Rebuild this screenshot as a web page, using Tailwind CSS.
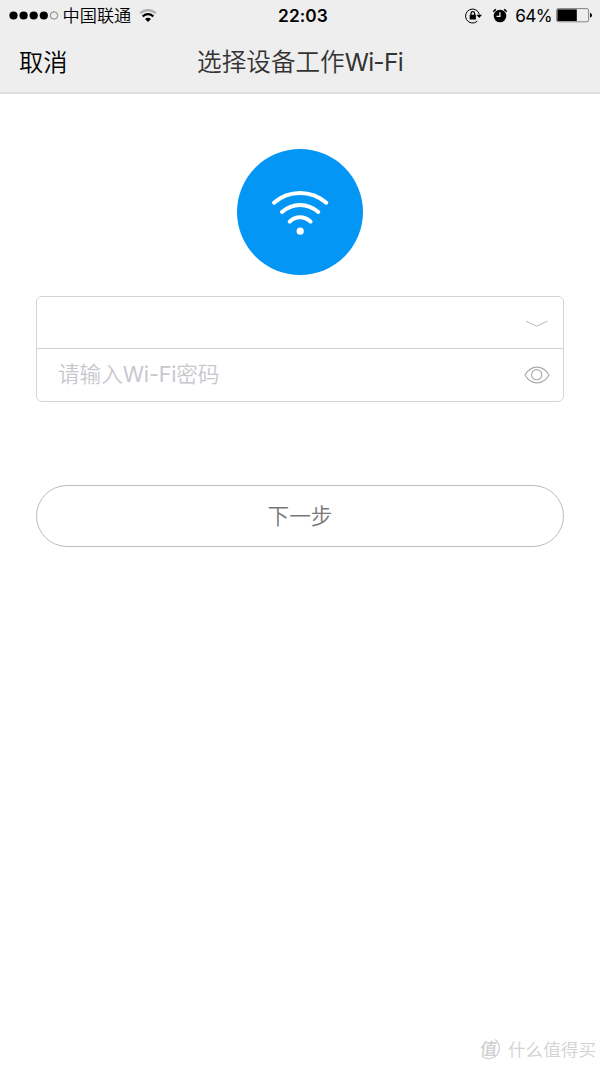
<!DOCTYPE html>
<html lang="zh-CN">
<head>
<meta charset="utf-8">
<title>选择设备工作Wi-Fi</title>
<script src="https://cdn.jsdelivr.net/npm/@tailwindcss/browser@4"></script>
</head>
<body class="bg-white">
<div class="relative flex h-[1067px] w-[600px] flex-col overflow-hidden bg-white font-['Inter','Noto_Sans_CJK_SC',sans-serif]">
  <header class="h-[94px] shrink-0 border-b-2 border-[#e0e0e0] bg-[#eeeeee]">
    <div class="grid h-[30px] grid-cols-3 items-center text-black">
      <div class="flex h-[30px] items-center pl-[9px]">
        <svg class="h-[10px] w-[50px]" viewBox="0 0 50 10"><circle cx="4.5" cy="4.5" r="4.1"/><circle cx="14.6" cy="4.5" r="4.1"/><circle cx="24.7" cy="4.5" r="4.1"/><circle cx="34.8" cy="4.5" r="4.1"/><circle cx="45" cy="4.5" r="3.7" fill="none" stroke="#555" stroke-width=".7"/></svg>
        <span class="ml-[3.5px] pt-px text-[17.2px] leading-[30px] font-[350]">中国联通</span>
        <svg class="ml-[7.5px] h-[14px] w-[18px]" viewBox="0 0 18 14" fill="none"><path d="M1 4.2Q9-2 17 4.2" stroke="#aaa" stroke-width="2"/><path d="M3.6 7.3Q9 3 14.4 7.3" stroke="#000" stroke-width="2.2"/><path d="M6 10Q9 7.3 12 10L9 13Z" fill="#000"/></svg>
      </div>
      <div class="pt-px pl-[6px] text-center text-[17.3px] leading-[30px] font-semibold tracking-[0.1px]">22:03</div>
      <div class="flex h-[30px] items-center justify-end pr-[7px]">
        <svg class="h-[16px] w-[17px]" viewBox="0 0 17 16" fill="none" stroke="#000"><path d="M14.4 6.5A7 7 0 1 0 12.3 13.2" stroke-width="1"/><path d="M11.4 6.8H17L14.2 9.9Z" fill="#000" stroke="none"/><rect x="4.7" y="6.7" width="6.2" height="4.8" fill="#000" stroke="none"/><path d="M6 7V5.4a1.8 1.8 0 0 1 3.6 0V7" stroke-width="1.2"/></svg>
        <svg class="ml-[10px] h-[16px] w-[16px]" viewBox="0 0 16 16"><circle cx="8" cy="8" r="6.3"/><path d="M1.5 4Q1.9 2 4.1 1.5M11.9 1.5Q14.1 2 14.5 4" fill="none" stroke="#000" stroke-width="1.3"/><path d="M7.9 4.2V8.4H4.5" fill="none" stroke="#eee" stroke-width="1.3"/></svg>
        <span class="ml-[7px] pt-px text-[17.2px] leading-[30px] tracking-[-0.6px]">64%</span>
        <svg class="ml-[4px] h-[15px] w-[37px]" viewBox="0 0 37 15"><rect x=".6" y=".6" width="32" height="13.2" rx="1.6" fill="none" stroke="#777" stroke-width=".9"/><rect x="1.4" y="1.4" width="19.4" height="11.6" fill="#000"/><path d="M34 4.7q2 .6 2 2.5t-2 2.5z"/></svg>
      </div>
    </div>
    <div class="grid h-[62px] grid-cols-[100px_400px_100px] items-center">
      <button class="pt-px pl-[19px] text-left text-[24.3px] leading-[62px] font-[350] text-black">取消</button>
      <h1 class="h-[62px] text-center text-[24.6px] leading-[63px] font-[350] text-[#333]">选择设备工作<span class="font-normal tracking-[-0.75px]">Wi-Fi</span></h1>
    </div>
  </header>
  <main class="flex flex-col items-center px-[36px] pt-[55px]">
    <div class="size-[126px] rounded-full bg-[#0396f5]">
      <svg class="size-[126px]" viewBox="0 0 126 126" fill="none" stroke="#fff" stroke-width="4" stroke-linecap="round"><path d="M37 53.7C52 40.6 74 40.6 89.3 53.7"/><path d="M45 63C55.5 53.6 70.5 53.6 81.3 63"/><path d="M52.7 72.6C58.6 66.8 67.4 66.8 73.6 72.6"/><circle cx="63.2" cy="82.2" r="3.6" fill="#fff" stroke="none"/></svg>
    </div>
    <div class="mt-[21px] h-[106px] w-full rounded-[6px] border border-[#d4d4d4]">
      <div class="flex h-[52px] items-center justify-end border-b border-[#cfcfcf] pt-[2px] pr-[15px]">
        <svg class="h-[8px] w-[23px]" viewBox="0 0 23 8" fill="none" stroke="#bbb"><path d="M1 1.2L11.7 6.2L22.3 1.2"/></svg>
      </div>
      <div class="flex h-[52px] items-center justify-between pr-[13px] pl-[21px]">
        <span class="pb-[2px] text-[21.6px] leading-[50px] font-[350] text-[#c7c7cd]">请输入<span class="font-normal tracking-[-0.2px]">Wi-Fi</span>密码</span>
        <svg class="h-[18px] w-[26px]" viewBox="0 0 26 18" fill="none" stroke="#aaa" stroke-width="1.1"><path d="M1 9C7-1.5 19-1.5 25 9C19 19.5 7 19.5 1 9Z"/><circle cx="12.7" cy="8.7" r="5.1"/></svg>
      </div>
    </div>
    <button class="mt-[83px] h-[62px] w-full rounded-full border border-[#bcbcbc] pt-px text-[21.6px] font-[350] text-[#777]">下一步</button>
  </main>
  <footer class="mt-auto flex h-[36px] items-center justify-end pr-[4px] text-[#d2d2d2]">
    <svg class="h-[24px] w-[26px]" viewBox="0 0 26 24" fill="none"><path d="M17.2 2.4A10.6 10.6 0 1 1 4.2 19.4" stroke="#d2d2d2" stroke-width="1.2"/><text x="3.4" y="18" font-size="17" font-weight="500" fill="#cfcfcf" transform="skewX(-6)">值</text></svg>
    <span class="ml-[4px] pt-[2px] text-[17.6px] leading-[36px] font-[350]">什么值得买</span>
  </footer>
</div>
</body>
</html>
